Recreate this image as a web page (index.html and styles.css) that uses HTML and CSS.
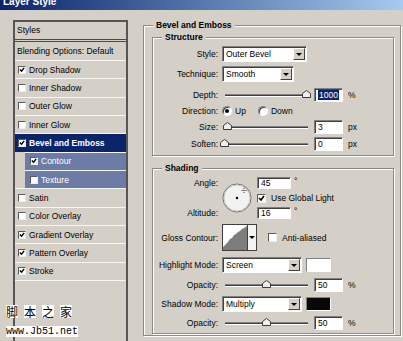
FILE: index.html
```html
<!DOCTYPE html>
<html lang="en">
<head>
    <meta charset="UTF-8">
    <meta name="viewport" content="width=device-width, initial-scale=1.0">
    <title>Layer Style</title>
    <link rel="stylesheet" href="styles.css">
</head>
<body>
<div class="window">
    <div class="titlebar"><span>Layer Style</span></div>

    <div class="content">
        <div class="styles-list">
            <div class="list-head">Styles</div>
            <div class="list-item blend">Blending Options: Default</div>
            <div class="list-item"><span class="check"><svg viewBox="0 0 7 7"><path d="M1 3l2 2 3-4"/></svg></span>Drop Shadow</div>
            <div class="list-item"><span class="check"></span>Inner Shadow</div>
            <div class="list-item"><span class="check"></span>Outer Glow</div>
            <div class="list-item"><span class="check"></span>Inner Glow</div>
            <div class="list-item selected"><span class="check"><svg viewBox="0 0 7 7"><path d="M1 3l2 2 3-4"/></svg></span>Bevel and Emboss</div>
            <div class="list-item sub"><span class="check"><svg viewBox="0 0 7 7"><path d="M1 3l2 2 3-4"/></svg></span>Contour</div>
            <div class="list-item sub"><span class="check"></span>Texture</div>
            <div class="list-item"><span class="check"></span>Satin</div>
            <div class="list-item"><span class="check"></span>Color Overlay</div>
            <div class="list-item"><span class="check"><svg viewBox="0 0 7 7"><path d="M1 3l2 2 3-4"/></svg></span>Gradient Overlay</div>
            <div class="list-item"><span class="check"><svg viewBox="0 0 7 7"><path d="M1 3l2 2 3-4"/></svg></span>Pattern Overlay</div>
            <div class="list-item"><span class="check"><svg viewBox="0 0 7 7"><path d="M1 3l2 2 3-4"/></svg></span>Stroke</div>
            <div class="list-end"></div>
        </div>

        <fieldset class="group outer">
            <legend>Bevel and Emboss</legend>

            <fieldset class="group structure">
                <legend>Structure</legend>
                <div class="row">
                    <span class="label">Style:</span>
                    <div class="select w-style"><span>Outer Bevel</span><i class="arrow"></i></div>
                </div>
                <div class="row mt4">
                    <span class="label">Technique:</span>
                    <div class="select w-tech"><span>Smooth</span><i class="arrow"></i></div>
                </div>
                <div class="row mt5">
                    <span class="label">Depth:</span>
                    <div class="slider"><div class="track"></div><svg class="thumb" style="left: 80px" viewBox="0 0 9 8"><path d="M.5 7.5v-4l4-3 4 3v4z"/></svg></div>
                    <div class="field"><span class="picked">1000</span></div>
                    <span class="unit">%</span>
                </div>
                <div class="row">
                    <span class="label">Direction:</span>
                    <span class="radio on"></span><span class="opt up">Up</span>
                    <span class="radio"></span><span class="opt">Down</span>
                </div>
                <div class="row">
                    <span class="label">Size:</span>
                    <div class="slider"><div class="track"></div><svg class="thumb" style="left: 1px" viewBox="0 0 9 8"><path d="M.5 7.5v-4l4-3 4 3v4z"/></svg></div>
                    <div class="field">3</div>
                    <span class="unit">px</span>
                </div>
                <div class="row mt1">
                    <span class="label">Soften:</span>
                    <div class="slider"><div class="track"></div><svg class="thumb" style="left: -2px" viewBox="0 0 9 8"><path d="M.5 7.5v-4l4-3 4 3v4z"/></svg></div>
                    <div class="field">0</div>
                    <span class="unit">px</span>
                </div>
            </fieldset>

            <fieldset class="group shading">
                <legend>Shading</legend>
                <div class="angle-grid">
                    <span class="label">Angle:</span>
                    <svg class="dial" viewBox="0 0 30 30">
                        <circle cx="15" cy="15" r="14" fill="#f2f2f0" stroke="#707070"/>
                        <circle cx="15" cy="15" r="13" fill="none" stroke="#c8c8c8"/>
                        <circle cx="15" cy="15" r="1.2" fill="#000"/>
                        <path d="M19.5 7.5h5M22 5v5" stroke="#333" stroke-dasharray="1 1" fill="none"/>
                    </svg>
                    <div class="angle-value"><div class="field wide">45</div><span class="deg">°</span></div>
                    <div class="global"><span class="check big"><svg viewBox="0 0 7 7"><path d="M1 3l2 2 3-4"/></svg></span>Use Global Light</div>
                    <span class="label alt">Altitude:</span>
                    <div class="angle-value alt"><div class="field wide">16</div><span class="deg">°</span></div>
                </div>
                <div class="row gloss">
                    <span class="label">Gloss Contour:</span>
                    <div class="contour">
                        <svg viewBox="0 0 24 25"><polygon points="0,25 0,22 3,19 5,17 7,14 9,13 11,10 13,9 15,7 17,6 19,4 21,3 24,1 24,25" fill="#7d7d7b"/></svg>
                        <i class="arrow flat"></i>
                    </div>
                    <span class="check big aa"></span><span>Anti-aliased</span>
                </div>
                <div class="row mt6">
                    <span class="label">Highlight Mode:</span>
                    <div class="select w-mode"><span>Screen</span><i class="arrow"></i></div>
                    <span class="swatch"></span>
                </div>
                <div class="row small mt5">
                    <span class="label">Opacity:</span>
                    <div class="slider"><div class="track"></div><svg class="thumb" style="left: 40px" viewBox="0 0 9 8"><path d="M.5 7.5v-4l4-3 4 3v4z"/></svg></div>
                    <div class="field">50</div>
                    <span class="unit">%</span>
                </div>
                <div class="row mt4">
                    <span class="label">Shadow Mode:</span>
                    <div class="select w-mode"><span>Multiply</span><i class="arrow"></i></div>
                    <span class="swatch dark"></span>
                </div>
                <div class="row small mt4">
                    <span class="label">Opacity:</span>
                    <div class="slider"><div class="track"></div><svg class="thumb" style="left: 40px" viewBox="0 0 9 8"><path d="M.5 7.5v-4l4-3 4 3v4z"/></svg></div>
                    <div class="field">50</div>
                    <span class="unit">%</span>
                </div>
            </fieldset>
        </fieldset>
    </div>

    <div class="watermark">
        <div class="wm-cn"><span>脚</span><span>本</span><span>之</span><span>家</span></div>
        <div class="wm-url"><span>www.Jb51.net</span></div>
    </div>
</div>
</body>
</html>
```

FILE: styles.css
```css
body {
    margin: 0;
    background-color: #d4d0c8;
    font-family: "Liberation Sans", Arial, sans-serif;
    font-size: 8.5px;
    color: #000;
}

.window {
    position: relative;
    height: 341px;
    overflow: hidden;
}

.titlebar {
    height: 10px;
    overflow: hidden;
    padding-left: 3px;
    background: linear-gradient(to right, #0a246a, #a6caf0);
    color: #fff;
    font-size: 10px;
    font-weight: bold;
}

.titlebar span {
    display: block;
    line-height: 10px;
    margin-top: -3px;
}

.content {
    display: flex;
    align-items: flex-start;
    padding: 10px 0 0 13px;
}

/* left list */

.styles-list {
    width: 115px;
    height: 340px;
    box-sizing: border-box;
    border: 2px solid #555;
    flex-shrink: 0;
}

.list-head {
    height: 17px;
    line-height: 17px;
    padding-left: 2px;
    border-bottom: 3px double #4a4a4a;
}

.list-item {
    display: flex;
    align-items: center;
    height: 18.33px;
    box-sizing: border-box;
    padding-left: 3px;
    border-top: 1px solid #f6f6f4;
}

.list-item.blend {
    height: 18px;
    padding-left: 2px;
    border-top: none;
}

.list-item.selected {
    background-color: #0a246a;
    color: #fff;
    font-weight: bold;
}

.list-item.sub {
    margin-left: 10px;
    padding-left: 5px;
    background-color: #6d7ca6;
    color: #fff;
}

.list-end {
    border-top: 1px solid #f6f6f4;
}

.check {
    display: inline-flex;
    align-items: center;
    justify-content: center;
    width: 8px;
    height: 8px;
    box-sizing: border-box;
    margin-right: 3px;
    background-color: #fff;
    border: 1px solid;
    border-color: #5a5a5a #eee #eee #5a5a5a;
    flex-shrink: 0;
}

.check svg {
    display: block;
    width: 6px;
    height: 6px;
}

.check path {
    fill: none;
    stroke: #000;
    stroke-width: 1.6;
}

.check.big {
    width: 9px;
    height: 9px;
    margin-right: 5px;
}

.check.big svg {
    width: 7px;
    height: 7px;
}

/* group boxes */

.group {
    margin: 0;
    min-width: 0;
    border: 1px solid #8a8a86;
    box-shadow: inset 1px 1px 0 #fff, 1px 1px 0 #fff;
}

.group legend {
    font-weight: bold;
    line-height: 11px;
    padding: 0 3px;
    background-color: #d4d0c8;
}

.outer {
    width: 258px;
    box-sizing: border-box;
    margin-left: 15px;
    padding: 1px 6px 1px 8px;
}

.outer > legend {
    margin-left: 1px;
}

.structure,
.shading {
    padding: 3px 0 3px 0;
}

.structure > legend,
.shading > legend {
    margin-left: 9px;
}

.shading {
    margin-top: 7px;
}

.row {
    display: flex;
    align-items: center;
    height: 16px;
}

.row.small {
    height: 14px;
}

.mt1 { margin-top: 1px; }
.mt4 { margin-top: 4px; }
.mt5 { margin-top: 5px; }
.mt6 { margin-top: 6px; }

.label {
    width: 65px;
    margin-right: 4px;
    text-align: right;
    flex-shrink: 0;
}

/* controls */

.select {
    display: flex;
    height: 16px;
    box-sizing: border-box;
    background-color: #fff;
    border: 1px solid;
    border-color: #808080 #fff #fff #808080;
    box-shadow: inset 1px 1px 0 #404040;
}

.select span {
    flex: 1;
    padding-left: 3px;
    line-height: 14px;
}

.w-style { width: 85px; }
.w-tech { width: 72px; }
.w-mode { width: 80px; }

.arrow {
    display: flex;
    align-items: center;
    justify-content: center;
    width: 12px;
    height: 12px;
    margin: 1px 1px 0 0;
    box-sizing: border-box;
    background-color: #d4d0c8;
    border: 1px solid;
    border-color: #fff #404040 #404040 #fff;
}

.arrow::after {
    content: "";
    border-top: 3px solid #000;
    border-left: 3px solid transparent;
    border-right: 3px solid transparent;
}

.arrow.flat {
    width: 9px;
    height: auto;
    margin: 0;
    background-color: #f4f4f2;
    border: none;
    border-left: 1px solid #404040;
}

.slider {
    position: relative;
    width: 88px;
    height: 14px;
    flex-shrink: 0;
}

.track {
    height: 1px;
    margin: 6px 2px 0 3px;
    background-color: #404040;
    border-top: 1px solid #808080;
    border-bottom: 1px solid #fff;
}

.thumb {
    position: absolute;
    top: 2px;
    width: 9px;
    height: 8px;
}

.thumb path {
    fill: #f0efeb;
    stroke: #3a3a3a;
    stroke-width: 1;
}

.field {
    width: 29px;
    height: 14px;
    box-sizing: border-box;
    margin-left: 4px;
    padding-left: 3px;
    line-height: 12px;
    background-color: #fff;
    border: 1px solid;
    border-color: #808080 #fff #fff #808080;
    box-shadow: inset 1px 1px 0 #404040;
}

.field.wide {
    width: 34px;
    height: 12px;
    margin-left: 0;
    line-height: 10px;
}

.picked {
    background-color: #0a246a;
    color: #fff;
    padding: 0 1px;
}

.unit {
    margin-left: 5px;
}

.radio {
    display: inline-flex;
    align-items: center;
    justify-content: center;
    width: 10px;
    height: 10px;
    box-sizing: border-box;
    border-radius: 50%;
    background-color: #fff;
    border: 1px solid;
    border-color: #808080 #fff #fff #808080;
    box-shadow: inset 1px 1px 0 #404040;
}

.radio.on::after {
    content: "";
    width: 4px;
    height: 4px;
    border-radius: 50%;
    background-color: #000;
}

.opt {
    margin-left: 3px;
}

.opt.up {
    margin-right: 12px;
}

.swatch {
    width: 25px;
    height: 14px;
    box-sizing: border-box;
    margin-left: 4px;
    background-color: #fff;
    border: 1px solid;
    border-color: #808080 #fff #fff #808080;
}

.swatch.dark {
    background-color: #080808;
}

/* angle block */

.angle-grid {
    display: grid;
    grid-template-columns: 69px 35px auto;
    grid-template-rows: 12px 12px 12px;
    row-gap: 3px;
    align-items: center;
}

.angle-grid .label {
    grid-column: 1;
}

.angle-grid .label.alt {
    grid-row: 3;
}

.dial {
    grid-column: 2;
    grid-row: 1 / 4;
    width: 30px;
    height: 30px;
}

.angle-value {
    grid-column: 3;
    grid-row: 1;
    display: flex;
    align-items: flex-start;
}

.angle-value.alt {
    grid-row: 3;
}

.deg {
    margin-left: 3px;
    line-height: 8px;
}

.global {
    grid-column: 3;
    grid-row: 2;
    display: flex;
    align-items: center;
}

.row.gloss {
    height: 27px;
    margin-top: 5px;
}

.contour {
    display: flex;
    width: 35px;
    height: 27px;
    box-sizing: border-box;
    background-color: #fff;
    border: 1px solid #404040;
}

.contour svg {
    display: block;
    width: 24px;
    height: 25px;
}

.check.aa {
    margin-left: 11px;
}

/* watermark */

.watermark {
    position: absolute;
    left: 6px;
    top: 305px;
}

.wm-cn span {
    display: inline-block;
    width: 12px;
    margin-right: 6px;
    line-height: 13px;
    background-color: #fff;
    font-family: "Noto Sans CJK SC", sans-serif;
    font-size: 12px;
}

.wm-url {
    margin-top: 7px;
}

.wm-url span {
    background-color: #fff;
    font-family: "Liberation Mono", monospace;
    font-size: 10px;
    line-height: 11px;
}
```
